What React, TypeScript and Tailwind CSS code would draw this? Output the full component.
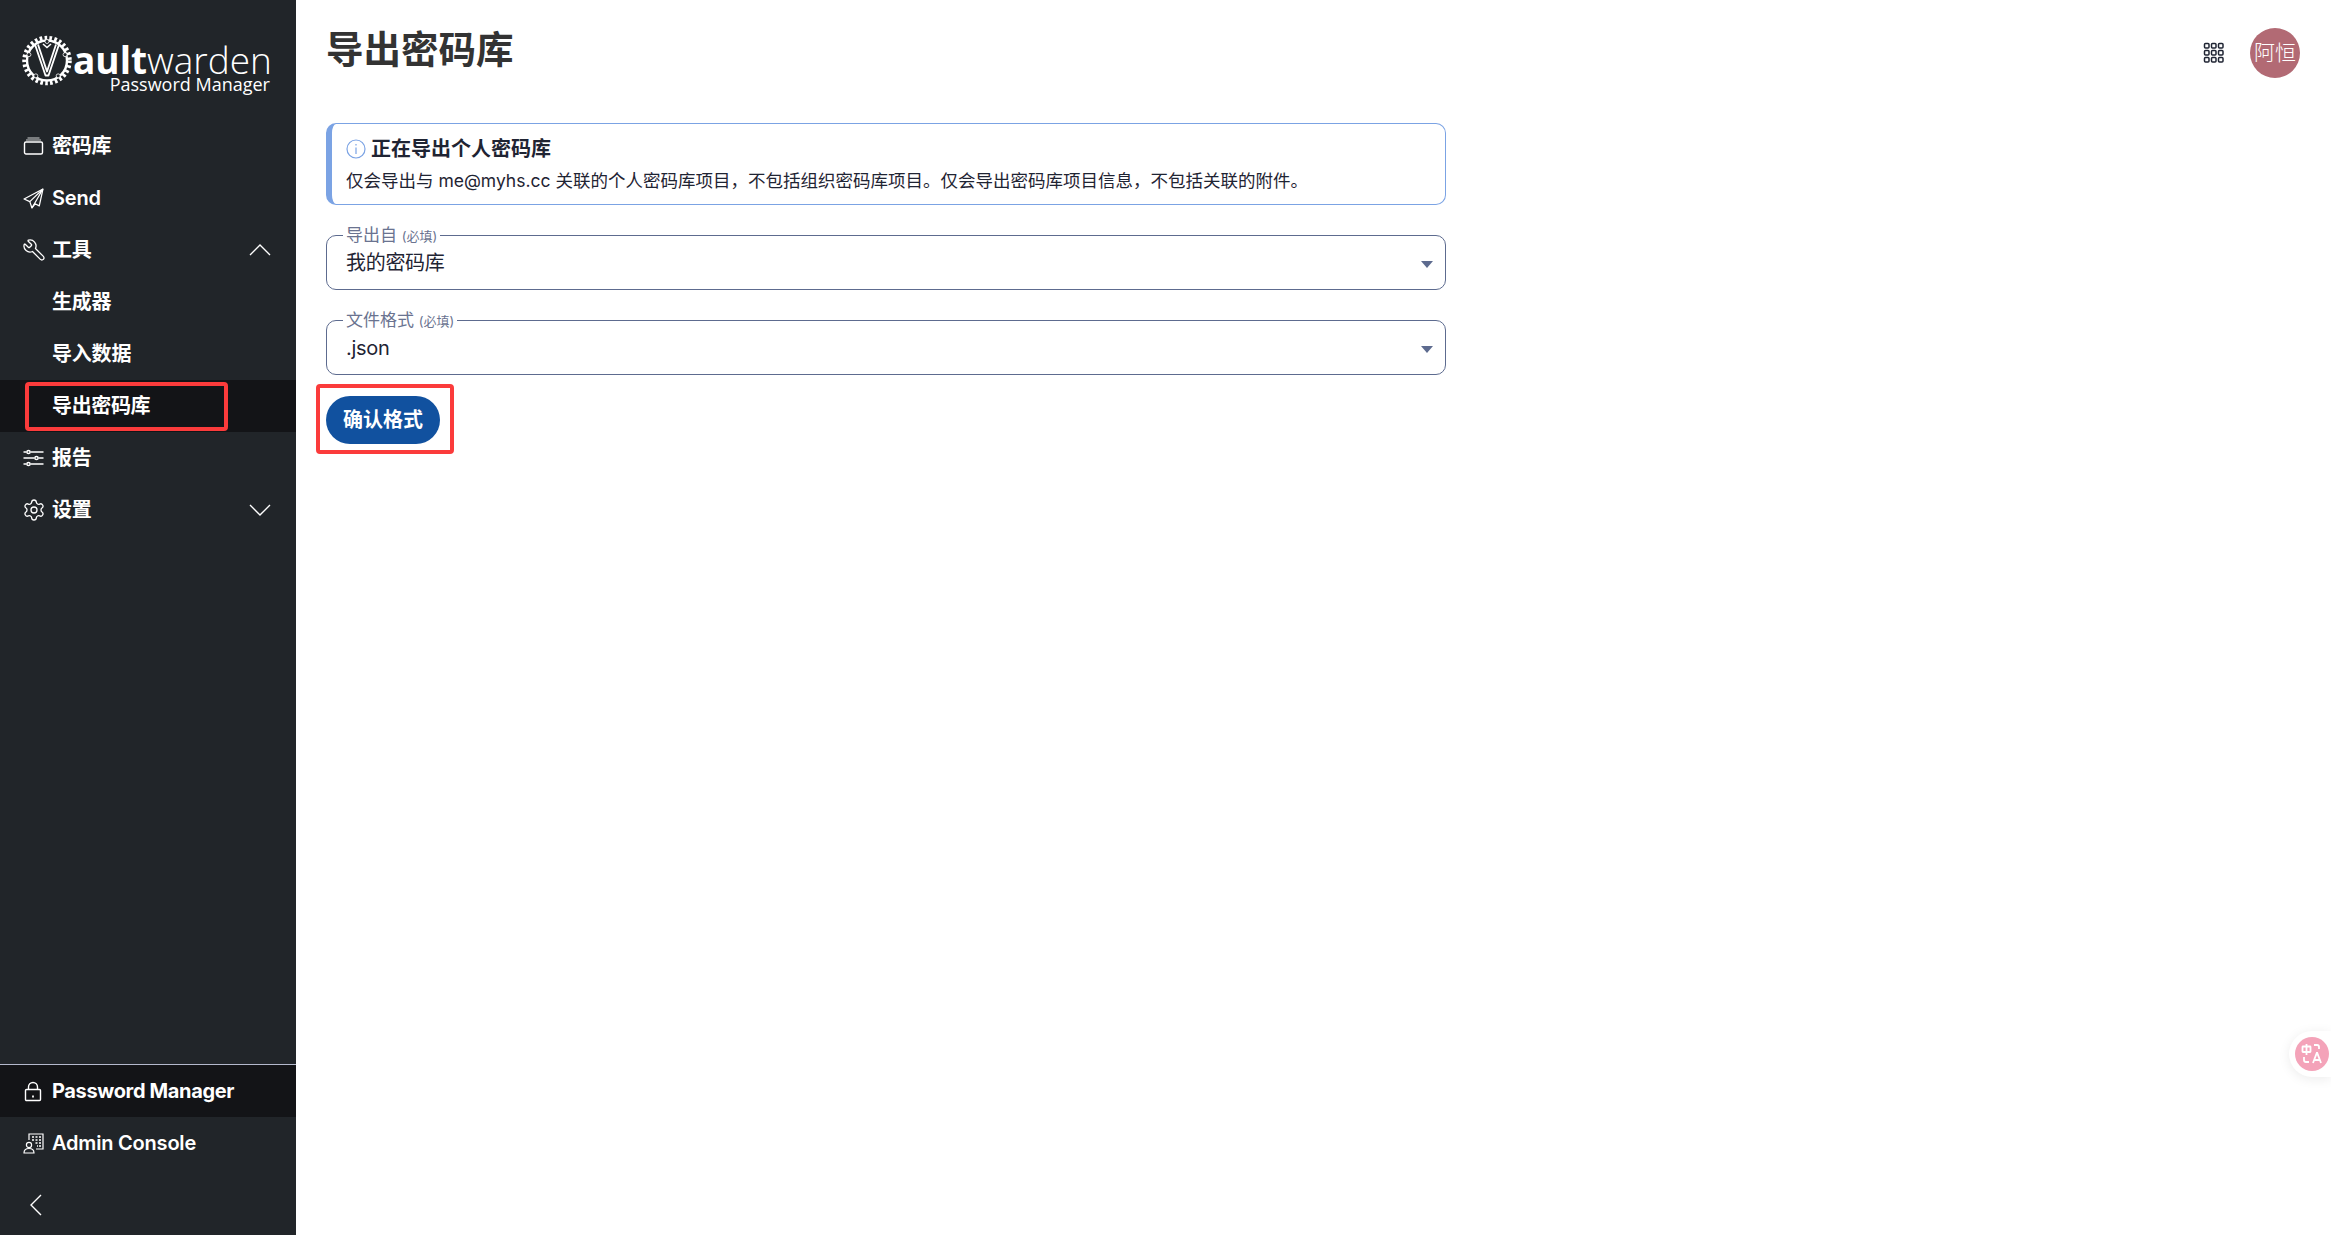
import React from "react";
import { Wrench, Settings } from "lucide-react";

const cjk = "font-['Inter','Noto_Sans_CJK_SC',sans-serif]";

const Logo: React.FC = () => {
  const bolts = [0, 72, 144, 216, 288];
  return (
    <svg width="50" height="51" viewBox="0 0 50 50" className="shrink-0">
      <circle cx="25" cy="25" r="22.5" fill="none" stroke="#fff" strokeWidth="4.5" strokeDasharray="2.6 2.3" />
      <circle cx="25" cy="25" r="20" fill="none" stroke="#fff" strokeWidth="2.4" />
      {bolts.map((a) => (
        <circle
          key={a}
          cx={25 + 19 * Math.sin((a * Math.PI) / 180)}
          cy={25 - 19 * Math.cos((a * Math.PI) / 180)}
          r="2"
          fill="#212529"
          stroke="#fff"
          strokeWidth="0.8"
        />
      ))}
      <path d="M13 9 L23.5 40 H26.5 L37 9 M16 9 L25 36 L34 9" fill="none" stroke="#fff" strokeWidth="1.8" strokeLinejoin="round" />
      <path d="M21 8.5 L25 12 L29 8.5" fill="none" stroke="#fff" strokeWidth="1.6" />
    </svg>
  );
};

const VaultIcon = () => (
  <svg width="21" height="20" viewBox="0 0 20 20" fill="none" stroke="currentColor" strokeWidth="1.4">
    <rect x="1" y="6" width="18" height="12" rx="1.5" />
    <path d="M2.5 4h15M4 2h12" strokeWidth="1.1" opacity="0.8" />
  </svg>
);

const SendIcon = () => (
  <svg width="21" height="21" viewBox="0 0 20 20" fill="none" stroke="currentColor" strokeWidth="1.2" strokeLinejoin="round">
    <path d="M19 1 L1 10.5 L6.5 13 L8.5 19 L11.5 15 L15.5 17 Z" />
    <path d="M19 1 L6.5 13 M19 1 L8.5 19" />
  </svg>
);

const SlidersIcon = () => (
  <svg width="21" height="20" viewBox="0 0 20 20" fill="none" stroke="currentColor" strokeWidth="1.5">
    <path d="M0 4h3M7 4h13M0 10h11M15 10h5M0 16h3M7 16h13" />
    <circle cx="5" cy="4" r="1.6" />
    <circle cx="13" cy="10" r="1.6" />
    <circle cx="5" cy="16" r="1.6" />
  </svg>
);

const LockIcon = () => (
  <svg width="20" height="21" viewBox="0 0 20 20" fill="none" stroke="currentColor" strokeWidth="1.4">
    <rect x="2.5" y="8" width="15" height="11" rx="1" />
    <path d="M5.5 8V5.5a4.5 4.5 0 0 1 9 0V8" />
    <path d="M10 14v2" strokeWidth="1.8" />
  </svg>
);

const AdminIcon = () => (
  <svg width="21" height="21" viewBox="0 0 21 21" fill="none" stroke="currentColor" strokeWidth="1.2">
    <path d="M6 7V1h14v15h-7" />
    <path d="M9 4h2M12.5 4h2M16 4h2M9 7h2M12.5 7h2M16 7h2M12.5 10h2M16 10h2M14 13h1M16 13h2" strokeWidth="1.5" />
    <circle cx="6" cy="12" r="2.6" />
    <path d="M1 20c0-3 2-4.500 5-4.500s5 1.500 5 4.500Z" />
  </svg>
);

const Chevron: React.FC<{ dir: "up" | "down" }> = ({ dir }) => (
  <svg width="22" height="12" viewBox="0 0 22 12" fill="none" stroke="currentColor" strokeWidth="1.4" className="ml-auto -translate-x-[1px]">
    <path d={dir === "up" ? "M1 11 L11 1 L21 11" : "M1 1 L11 11 L21 1"} />
  </svg>
);

const NavRow: React.FC<{
  icon?: React.ReactNode;
  label: string;
  active?: boolean;
  right?: React.ReactNode;
  boxed?: boolean;
  className?: string;
}> = ({ icon, label, active, right, boxed, className = "" }) => (
  <div className={`relative flex h-[52px] items-center pl-[23px] pr-[24px] ${active ? "bg-[#131417]" : ""}`}>
    <span className="flex w-[29px] shrink-0 items-center">{icon}</span>
    <span className={`text-[20px] leading-none whitespace-nowrap ${active ? "font-bold tracking-[-0.35px]" : "font-semibold tracking-[-0.2px]"} ${className}`}>
      {label}
    </span>
    {right}
    {boxed && <span className="absolute top-[2px] left-[25px] h-[49px] w-[203px] rounded-[4px] border-4 border-[#fb3b3b]" />}
  </div>
);

const Field: React.FC<{ label: string; value: string }> = ({ label, value }) => (
  <fieldset className="relative h-[66px] rounded-[10px] border border-[#5d6b8f] pl-[19px]">
    <legend className="-ml-[3px] px-[3px] text-[17px] leading-[22px] text-[#6a7390] whitespace-nowrap">
      {label} <span className="text-[13px]">(必填)</span>
    </legend>
    <div className="mt-[1px] text-[20px] leading-[30px] tracking-[-0.3px] text-[#1f2433]">{value}</div>
    <span className="absolute top-[14px] right-[12px] h-0 w-0 border-x-[6px] border-t-[7px] border-x-transparent border-t-[#5d6b8f]" />
  </fieldset>
);

export default function App() {
  return (
    <div className={`flex h-screen w-full overflow-hidden bg-white ${cjk}`}>
      <aside className="flex h-full w-[296px] shrink-0 flex-col bg-[#212529] text-white">
        <div className="flex h-[120px] flex-col pt-[35px] pl-[22px]">
          <div className="flex items-start">
            <Logo />
            <div className="mt-[10px] ml-[1px] flex flex-col font-['Open_Sans',sans-serif] whitespace-nowrap">
              <div className="text-[37px] leading-[30px]">
                <span className="font-bold">ault</span>
                <span className="font-light">warden</span>
              </div>
              <div className="pr-[2px] text-right text-[18px] leading-[18px] font-normal">Password Manager</div>
            </div>
          </div>
        </div>
        <nav className="flex flex-col">
          <NavRow icon={<VaultIcon />} label="密码库" />
          <NavRow icon={<SendIcon />} label="Send" />
          <NavRow icon={<Wrench size={24} strokeWidth={1.3} className="-ml-[1px] -scale-x-100" />} label="工具" right={<Chevron dir="up" />} />
          <NavRow label="生成器" />
          <NavRow label="导入数据" />
          <NavRow label="导出密码库" active boxed />
          <NavRow icon={<SlidersIcon />} label="报告" />
          <NavRow icon={<Settings size={24} strokeWidth={1.3} className="-ml-[1px]" />} label="设置" right={<Chevron dir="down" />} />
        </nav>
        <div className="mt-auto border-t border-[#b4b9cc]">
          <NavRow icon={<LockIcon />} label="Password Manager" active className="-mt-[1px]" />
          <NavRow icon={<AdminIcon />} label="Admin Console" className="-mt-[1px]" />
          <div className="flex h-[66px] items-center pt-[6px] pl-[30px]">
            <svg width="12" height="22" viewBox="0 0 12 22" fill="none" stroke="currentColor" strokeWidth="1.4">
              <path d="M11 1 L1 11 L11 21" />
            </svg>
          </div>
        </div>
      </aside>

      <main className="relative flex-1 pr-[31px] pl-[30px]">
        <header className="flex h-[123px] items-start justify-between">
          <h1 className="mt-[23px] text-[37.5px] leading-[54px] font-bold text-[#333]">导出密码库</h1>
          <div className="mt-[28px] flex items-center gap-[26px]">
            <svg width="21" height="21" viewBox="0 0 21 21" fill="none" stroke="#1f2433" strokeWidth="1.5" className="-translate-y-[1px]">
              {[1.5, 8.5, 15.5].map((y) =>
                [1.5, 8.5, 15.5].map((x) => <rect key={`${x}-${y}`} x={x} y={y} width="4.5" height="4.5" rx="1" />),
              )}
            </svg>
            <div className="flex h-[50px] w-[50px] items-center justify-center rounded-full bg-[#b26a74] text-[21px] font-light text-white">
              阿恒
            </div>
          </div>
        </header>

        <div className="flex w-[1120px] flex-col">
          <div className="h-[82px] rounded-[10px] border border-l-[6px] border-[#7ba3e4] pt-[13px] pl-[14px]">
            <div className="flex items-center gap-[5px] text-[20px] leading-[25px] font-bold text-[#1f2433]">
              <span className="-ml-[1px] flex h-[20px] w-[21px] -translate-y-[1px] items-center justify-center">
                <svg width="20" height="20" viewBox="0 0 20 20" fill="none" stroke="#7ba3e4" strokeWidth="1.2">
                  <circle cx="10" cy="10" r="9" />
                  <path d="M10 8.500v6.500M10 5v1.500" />
                </svg>
              </span>
              正在导出个人密码库
            </div>
            <p className="mt-[7px] text-[17.5px] leading-[24px] text-[#1f2433] whitespace-nowrap">
              仅会导出与 me@myhs.cc 关联的个人密码库项目，不包括组织密码库项目。仅会导出密码库项目信息，不包括关联的附件。
            </p>
          </div>
          <div className="mt-[19px]">
            <Field label="导出自" value="我的密码库" />
          </div>
          <div className="mt-[19px]">
            <Field label="文件格式" value=".json" />
          </div>
          <div className="mt-[9px] flex h-[70px] w-[138px] -translate-x-[10px] items-center rounded-[4px] border-4 border-[#fb3b3b] pt-[2px] pl-[6px]">
            <button className="h-[48px] w-[114px] rounded-full bg-[#11519f] text-[20px] font-bold text-white">确认格式</button>
          </div>
        </div>

        <div className="absolute top-[1031px] right-0 flex h-[46px] w-[42px] items-center rounded-l-full bg-white pl-[6px] shadow-[0_2px_12px_rgba(0,0,0,0.08)]">
          <div className="flex h-[34px] w-[34px] items-center justify-center rounded-full bg-[#f4a3b9]">
            <svg width="24" height="24" viewBox="0 0 24 24" fill="none" stroke="#fff" strokeWidth="1.8">
              <rect x="2.500" y="4.500" width="8" height="5.500" rx="0.5" />
              <path d="M6.500 2v11M14 3h3a2 2 0 0 1 2 2v2M4 15v3a2 2 0 0 0 2 2h3M13 21l3.800-10h0.400L21 21M14.500 18h5" />
            </svg>
          </div>
        </div>
      </main>
    </div>
  );
}
